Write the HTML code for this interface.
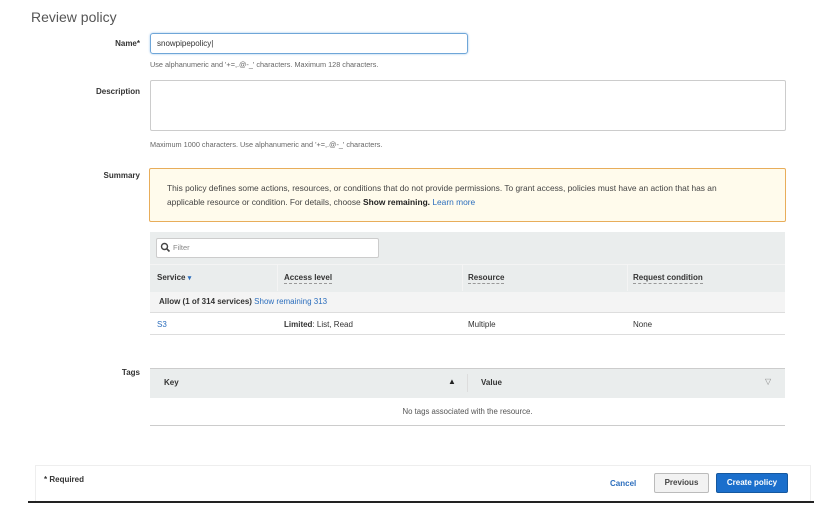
<!DOCTYPE html>
<html><head><meta charset="utf-8"><style>
*{box-sizing:border-box;margin:0;padding:0}
body{width:828px;height:513px;background:#fff;font-family:"Liberation Sans",Arial,sans-serif;color:#444;position:relative;overflow:hidden}
.a{position:absolute;white-space:nowrap}
.lbl{font-weight:bold;font-size:8px;color:#333;text-align:right;width:100px}
.hint{font-size:7.3px;color:#666}
.th{font-weight:bold;font-size:8px;color:#333;border-bottom:1px dashed #999;padding-bottom:1px}
.td{font-size:8px;color:#333}
.blue{color:#2c6ebd}
</style></head><body>
<div class="a" style="left:31px;top:9px;font-size:14px;color:#555">Review policy</div>

<div class="a lbl" style="left:40px;top:39px">Name*</div>
<div class="a" style="left:150px;top:33px;width:318px;height:21px;border:1px solid #6fa6d8;border-radius:3px;box-shadow:0 0 2px #9cc4ea"></div>
<div class="a td" style="left:157px;top:39px">snowpipepolicy|</div>
<div class="a hint" style="left:150px;top:60px">Use alphanumeric and '+=,.@-_' characters. Maximum 128 characters.</div>

<div class="a lbl" style="left:40px;top:87px">Description</div>
<div class="a" style="left:150px;top:80px;width:636px;height:51px;border:1px solid #ccc;border-radius:2px"></div>
<div class="a hint" style="left:150px;top:140px">Maximum 1000 characters. Use alphanumeric and '+=,.@-_' characters.</div>

<div class="a lbl" style="left:40px;top:171px">Summary</div>
<div class="a" style="left:149px;top:168px;width:637px;height:54px;border:1px solid #e8ad5a;background:#fffbec;border-radius:2px"></div>
<div class="a td" style="left:167px;top:183px;font-size:8.4px;color:#444">This policy defines some actions, resources, or conditions that do not provide permissions. To grant access, policies must have an action that has an</div>
<div class="a td" style="left:167px;top:197px;font-size:8.4px;color:#444">applicable resource or condition. For details, choose <b style="color:#222">Show remaining.</b> <span class="blue">Learn more</span></div>

<div class="a" style="left:150px;top:232px;width:635px;height:60px;background:#eaeded"></div>
<div class="a" style="left:156px;top:238px;width:223px;height:20px;background:#fff;border:1px solid #ccc;border-radius:2px"></div>
<svg class="a" style="left:160px;top:242px" width="11" height="11" viewBox="0 0 11 11"><circle cx="4.5" cy="4.5" r="3" fill="none" stroke="#444" stroke-width="1.4"/><path d="M6.8 6.8 L9.5 9.5" stroke="#444" stroke-width="1.6"/></svg>
<div class="a" style="left:173px;top:243px;font-size:7.5px;color:#888">Filter</div>
<div class="a" style="left:150px;top:264px;width:635px;height:1px;background:#f4f4f4"></div>
<div class="a" style="left:277px;top:265px;width:1px;height:26px;background:#f4f4f4"></div>
<div class="a" style="left:462px;top:265px;width:1px;height:26px;background:#f4f4f4"></div>
<div class="a" style="left:627px;top:265px;width:1px;height:26px;background:#f4f4f4"></div>
<div class="a" style="left:157px;top:273px;font-weight:bold;font-size:8px;color:#333">Service <span class="blue" style="font-size:7px">▾</span></div>
<div class="a th" style="left:284px;top:273px">Access level</div>
<div class="a th" style="left:468px;top:273px">Resource</div>
<div class="a th" style="left:633px;top:273px">Request condition</div>
<div class="a" style="left:150px;top:292px;width:635px;height:21px;background:#f4f4f4;border-bottom:1px solid #ddd"></div>
<div class="a td" style="left:159px;top:297px"><b>Allow (1 of 314 services)</b> <span class="blue">Show remaining 313</span></div>
<div class="a" style="left:150px;top:313px;width:635px;height:22px;border-bottom:1px solid #ddd"></div>
<div class="a td blue" style="left:157px;top:320px">S3</div>
<div class="a td" style="left:284px;top:320px"><b>Limited</b>: List, Read</div>
<div class="a td" style="left:468px;top:320px">Multiple</div>
<div class="a td" style="left:633px;top:320px">None</div>

<div class="a lbl" style="left:40px;top:368px">Tags</div>
<div class="a" style="left:150px;top:368px;width:635px;height:30px;background:#eaeded;border-top:1px solid #ccc"></div>
<div class="a" style="left:467px;top:374px;width:1px;height:18px;background:#ddd"></div>
<div class="a" style="left:164px;top:378px;font-weight:bold;font-size:8px;color:#333">Key</div>
<div class="a" style="left:448px;top:377px;font-size:8px;color:#222">▲</div>
<div class="a" style="left:481px;top:378px;font-weight:bold;font-size:8px;color:#333">Value</div>
<div class="a" style="left:765px;top:377px;font-size:8px;color:#888">▽</div>
<div class="a td" style="left:150px;width:635px;text-align:center;top:407px;color:#555;font-size:7.8px">No tags associated with the resource.</div>
<div class="a" style="left:150px;top:425px;width:635px;height:1px;background:#ccc"></div>

<div class="a" style="left:35px;top:465px;width:776px;height:36px;border:1px solid #eee;border-bottom:none"></div>
<div class="a" style="left:28px;top:501px;width:786px;height:2px;background:#222"></div>
<div class="a" style="left:44px;top:475px;font-size:8px;font-weight:bold;color:#333">* Required</div>
<div class="a" style="left:610px;top:479px;font-size:8px;font-weight:bold;color:#2c6ebd">Cancel</div>
<div class="a" style="left:654px;top:473px;width:55px;height:20px;border:1px solid #bbb;background:#f2f2f2;border-radius:2px;font-size:8px;font-weight:bold;color:#444;text-align:center;line-height:18px">Previous</div>
<div class="a" style="left:716px;top:473px;width:72px;height:20px;background:#1b6fcc;border:1px solid #15589f;border-radius:2px;font-size:8px;font-weight:bold;color:#fff;text-align:center;line-height:18px">Create policy</div>
</body></html>
